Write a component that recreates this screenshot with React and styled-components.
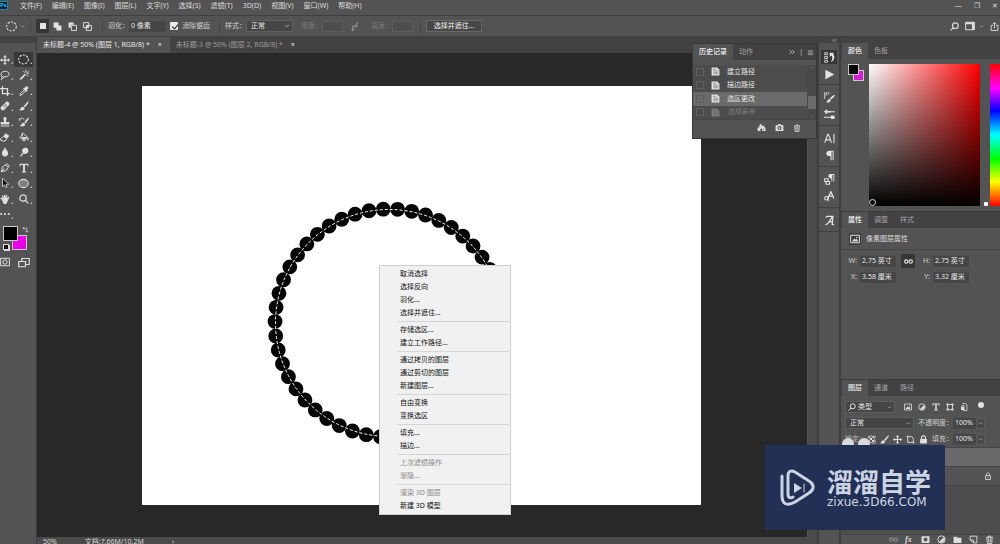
import React from 'react';
import styled, { createGlobalStyle, css } from 'styled-components';

const GlobalStyle = createGlobalStyle`
*{
    box-sizing: border-box;
    margin: 0;
    padding: 0;
}
body{
    font-family: "Noto Sans", "Noto Sans CJK SC", sans-serif;
    font-size: 7px;
    line-height: 12px;
    color: #dcdcdc;
    background: #535353;
    overflow: hidden;
}
button, input, select{
    font: inherit;
    color: inherit;
    border: none;
    background: none;
    outline: none;
}
svg{
    display: block;
    flex: none;
}
`;

// every glyph is drawn on a 16 x 16 board
const line = { fill: 'none', stroke: 'currentColor', strokeWidth: 1.6 };
const glyphs = {
  move: <path d="M8 0l3 3.4H9v3.7h3.7V5L16 8l-3.3 3V9H9v3.700h2L8 16l-3-3.300h2V9H3.300v2L0 8l3.300-3v2.100H7V3.400H5z" />,
  marquee: <ellipse cx="8" cy="8" rx="7" ry="6.500" {...line} strokeDasharray="3.200 1.800" />,
  lasso: <path d="M4 10.500C-1 8 2 2 8 2s9 5 4 8c-3 1.500-6 1-8 .5zm0 0c-2 0-2 3 0 3s2-2 0-3m-1 3l-1 2.500" {...line} />,
  wand: <g><path d="M1 14L9 6l2 2-8 8z" /><path d="M11 0v4M7 2l2 2M15 2l-2 2M12 5h4M12 7l3 3" {...line} /></g>,
  crop: <path d="M4 0v12h12M0 4h12v12" {...line} strokeWidth="2" />,
  eyedrop: <g><path d="M9 3l2-2c2-2 5 1 3.500 3.500L12.500 6.500l1 1-2 2-5-5 2-2z" /><path d="M8.500 6L2 12.500 1.500 15l2.500-.5L10.500 8" {...line} /></g>,
  heal: <g><path d="M1.500 9.500l8-8c3-2 7 2 5 5l-8 8c-3 2-7-2-5-5z" /><path d="M5 6l5 5M7 4l5 5M6 9l1 1M9 6l1 1" stroke="#535353" strokeWidth="1.200" /></g>,
  brush: <path d="M15.500.5C16.500 2 11 9 9.500 10.500l-2-2C9 6.500 14.500-.5 15.500.5zM6.800 9.200l2.200 2.200C8.500 15 4 16 0 14c3-.5 2.500-5 6.800-4.800z" />,
  stamp: <path d="M5.500 3c0-4 5-4 5 0 0 2-1 3-1 5H15v4H1V8h5.500c0-2-1-3-1-5zM1 13.500h14V15H1z" />,
  historyBrush: <g><path d="M15.500 1C16.500 2.500 12 9 10.500 10.500l-2-2C10 6.500 14.500 0 15.500 1zM7.800 9.200l2.200 2.200c-.5 3.600-5 4.600-9 2.600 3-.5 2.500-5 6.800-4.800z" /><path d="M1 6V2m0 3c2-4 6-4 7-1" {...line} /></g>,
  eraser: <g><path d="M9 2l6 4-4 5-6-4z" /><path d="M4.500 7.500L1 11v2l4 1.500h3l3-3.500" {...line} /></g>,
  bucket: <g><path d="M7 2l7 7-6 6-6.500-6.500zM5 1v6" {...line} /><path d="M13 8c3 2 3 4 2 6-2-1-2-3-2-6zM3 8h10l-5 5z" /></g>,
  drop: <path d="M8 0c1 4 5 6 5 10a5 5 0 0 1-10 0c0-4 4-6 5-10z" />,
  dodge: <path d="M10 1a5 5 0 1 1-2.500 9.300L3 15.500 1.500 14 6 9A5 5 0 0 1 10 1z" />,
  pen: <path d="M2 14L4 6l5-3 4 4-3 5zm0 0l5-5M9 3l2-2 4 4-2 2" {...line} />,
  type: <path d="M1 1h14v4h-1.500L13 3H9.500v10l2 .5V15h-7v-1.500l2-.5V3H3l-.5 2H1z" />,
  arrow: <path d="M4 0l10 10H9.500l2 4.500-2.500 1L7 11l-3 3z" fill="#111" stroke="currentColor" strokeWidth="1.300" />,
  ellipse: <ellipse cx="8" cy="8" rx="7" ry="6" fill="#808080" stroke="currentColor" strokeWidth="1.500" />,
  hand: <path d="M3 9L0 7l1.500-1.500L4 7 3 2.500 4.800 2 6.500 6V1h2v5L10 1.500l1.800.5L11 7l2.500-3 1.500 1-3 7-2 4H6z" />,
  zoom: <path d="M11.500 6.500a5 5 0 1 1-10 0 5 5 0 0 1 10 0zM10 10l5 5" {...line} strokeWidth="2" />,
  find: <path d="M14.500 6.500a5 5 0 1 1-10 0 5 5 0 0 1 10 0zM6 10l-5 5" {...line} strokeWidth="2" />,
  dots: <g><circle cx="2" cy="8" r="1.700" /><circle cx="8" cy="8" r="1.700" /><circle cx="14" cy="8" r="1.700" /></g>,
  swap: <path d="M2 5h9v9M5 2L2 5l3 3M8 11l3 3 3-3" {...line} />,
  mask: <g><path d="M1 2h14v12H1z" {...line} /><circle cx="8" cy="8" r="3.500" {...line} /></g>,
  screens: <g><path d="M5 2h10v8H5z" {...line} /><path d="M1 6h9v7H1z" fill="#535353" stroke="currentColor" strokeWidth="1.600" /></g>,
  square: <path d="M2 2h12v12H2z" />,
  unite: <path d="M1 1h9v5h5v9H6v-5H1z" />,
  subtract: <g><path d="M1 1h9v4H5v5H1z" /><path d="M6 6h9v9H6z" {...line} /></g>,
  intersect: <g><path d="M1 1h9v9H1zM6 6h9v9H6z" {...line} /><path d="M6 6h4v4H6z" /></g>,
  exchange: <path d="M5 15V7h8M2 12l3 3 3-3M10 4l3 3-3 3M13 0v4" {...line} />,
  workspace: <g><path d="M1 2h14v12H1z" {...line} /><path d="M11 2h4v12h-4zM1 2h14v3H1z" /></g>,
  share: <path d="M5 6H2v9h12V6h-3M8 11V1M5 4l3-3 3 3" {...line} />,
  down: <path d="M3 5l5 5 5-5" {...line} />,
  up: <path d="M3 11l5-5 5 5" {...line} />,
  menu: <path d="M2 4h12M2 7h12M2 10h12M2 13h12" {...line} strokeWidth="1.300" />,
  forward: <path d="M2 3l5 5-5 5M9 3l5 5-5 5" {...line} strokeWidth="2.400" />,
  back: <path d="M7 3L2 8l5 5M14 3L9 8l5 5" {...line} strokeWidth="2" />,
  state: <g><path d="M1 1h10l4 4v10H1z" /><path d="M3 4h6M4 7h9M4 9.500h9M4 12h9" stroke="#606060" strokeWidth="1" /></g>,
  newDoc: <path d="M1 14V8h3V4l4-3v4h5v3h2v6H9v-4H6v4zM10 10h2v2h-2z" fillRule="evenodd" />,
  camera: <path d="M1 4h3l1.500-2h5L12 4h3v10H1zm7 1.500a3.500 3.500 0 1 0 .1 0zm0 2a1.500 1.500 0 1 1-.1 0z" fillRule="evenodd" />,
  trash: <path d="M2 4h12M6 4V2h4v2M3.500 4l.5 11h8l.5-11M6.500 6v7M9.500 6v7" {...line} />,
  history: <g><path d="M1 1h4v3H1zM1 6.500h4v3H1zM1 12h4v3H1z" {...line} strokeWidth="1.200" /><path d="M8 1h6v1.500l-1 0c4 5 2 9-3 12.500 2-4 3-7 1-10L8.500 7z" /></g>,
  play: <path d="M2 1l13 7-13 7z" />,
  brushes: <g><path d="M1 0v10M4 0v3M7 0v3M2 4h3" {...line} strokeWidth="1.200" /><path d="M16 4c0 2-4 6-6 7l-1.500-1.500C10 7 15 3 16 4zM8 10l2 2c-1 3-4 4-7 3 2-1 2-5 5-5z" /></g>,
  sliders: <g><path d="M0 4h16M0 12h16" {...line} /><path d="M2 1h3v6H2zM10 9.500h5v5h-5zM6 3h4v2H6z" /></g>,
  character: <path d="M1 14L5.500 2h1L11 14M2.500 10h7M14.500 1v14" {...line} />,
  paragraph: <path d="M8 1h6v14h-1.500V2.500H11V15H9.500V9C1 9 2 1 8 1z" />,
  paragraphStyle: <g><path d="M9 0h6v11h-1.300V1.500H12V11h-1.300V6.500C5 6 5.500 0 9 0z" /><path d="M1 7h5v4H1zM3 11h5v4H3z" {...line} /></g>,
  characterStyle: <g><path d="M6 10l4-9 4.500 10M8 7.500h5" {...line} strokeWidth="1.800" /><circle cx="3.500" cy="10.500" r="2.500" {...line} /><path d="M6 8v7" {...line} /></g>,
  glyph: <path d="M3 4c0-3 3-2 6-2h4l-1 12h2.500M12.500 2C9 7 6 14 2 14M6.500 10H12" {...line} strokeWidth="1.800" />,
  image: <g><path d="M1 2h14v12H1z" {...line} /><path d="M3 12l4-5 2 2 2-1.500 2 4.500z" /><circle cx="11" cy="5.500" r="1.200" /></g>,
  adjust: <g><circle cx="8" cy="8" r="6.500" {...line} /><path d="M12.500 3.500A6.500 6.500 0 0 1 3.500 12.500z" /></g>,
  shape: <g><path d="M3 3h10v10H3z" {...line} /><path d="M1 1h4v4H1zM11 1h4v4h-4zM1 11h4v4H1zM11 11h4v4h-4z" /></g>,
  smart: <g><path d="M5 1h6l3 3v11H6" {...line} /><path d="M2 8h7v6H2z" /><path d="M3.500 8V5h4v3" {...line} /></g>,
  checker: <path d="M1 1h4v4H1zM9 1h4v4H9zM5 5h4v4H5zM13 5h2v4h-2zM1 9h4v4H1zM9 9h4v4H9zM5 13h4v2H5zM1 1h14v14H1V1m1 1v12h12V2z" fillRule="evenodd" />,
  artboard: <path d="M3 1v12h12M1 3h9l3 3v9" {...line} />,
  lock: <g><path d="M2 7h12v8H2z" /><path d="M4.500 7V4.500c0-4 7-4 7 0V7" {...line} strokeWidth="2" /></g>,
  lockOpen: <g><path d="M3 7h10v8H3z" {...line} /><path d="M5 7V4.500c0-4 6-4 6 0V7M8 9v3" {...line} /></g>,
  link: <path d="M7 8c0-4-6-4-6 0s6 4 6 0zm8 0c0-4-6-4-6 0s6 4 6 0z" {...line} strokeWidth="2" />,
  layerMask: <path d="M1 2h14v12H1zM8 4.500a3.500 3.500 0 1 0 .1 0z" fillRule="evenodd" />,
  folder: <path d="M1 3h6l1 2h7v9H1z" />,
  newLayer: <path d="M2 2h12v12H8L2 9zM2 9h6v5" {...line} />,
};

const Icon = ({ name, size = 9 }) => (
  <svg width={size} height={size} viewBox="0 0 16 16" fill="currentColor" aria-hidden="true">
    {glyphs[name]}
  </svg>
);

const Page = styled.div`
    display: flex;
    flex-direction: column;
    height: 100vh;
    min-width: 0;
    position: relative;
    overflow: hidden;
`;

const MenuBar = styled.header`
    display: flex;
    align-items: center;
    height: 16px;
    padding-bottom: 4px;
    padding-right: 2px;
    border-bottom: 1px solid #404040;
    nav{
        display: flex;
        gap: 10px;
        flex: 1;
        margin-left: 12px;
    }
`;
const PsLogo = styled.div`
    width: 8px;
    height: 9px;
    background: #06222f;
    border: 1px solid #1b86ae;
    border-left: none;
    color: #29b3e8;
    font-size: 6px;
    line-height: 7px;
    font-weight: 700;
`;
const PlainButton = styled.button`
    white-space: nowrap;
    display: flex;
    align-items: center;
`;
const WindowButtons = styled.div`
    display: flex;
    gap: 12px;
`;

const OptionsBar = styled.div`
    display: flex;
    align-items: center;
    height: 21px;
    flex: none;
    padding: 0 1px 0 6px;
    border-bottom: 1px solid #404040;
    white-space: nowrap;
`;
const Divider = styled.i`
    width: 1px;
    height: 14px;
    background: #464646;
    margin: 0 5px;
`;
const Modes = styled.div`
    display: flex;
    gap: 2px;
    margin-right: 3px;
`;
const ToolButton = styled.button`
    display: flex;
    align-items: center;
    justify-content: center;
    width: 13px;
    height: 14px;
    color: #e4e4e4;
    background: ${({ $active }) => ($active ? '#363636' : 'none')};
`;
const Label = styled.label`
    display: flex;
    align-items: center;
    gap: ${({ $gap }) => $gap || 0}px;
    white-space: nowrap;
    color: ${({ $dim }) => ($dim ? '#777' : '#d0d0d0')};
`;
const Field = styled.input`
    width: ${({ $w }) => $w}px;
    height: 11px;
    padding: 0 1px;
    background: ${({ $dim }) => ($dim ? '#4d4d4d' : '#454545')};
    border: 1px solid ${({ $dim }) => ($dim ? '#5c5c5c' : '#484848')};
    color: #e8e8e8;
`;
const Check = styled.input`
    appearance: none;
    width: 8px;
    height: 8px;
    background: #e8e8e8;
    border-radius: 1px;
    position: relative;
    &:checked::after{
        content: "";
        position: absolute;
        left: 3px;
        top: 1px;
        width: 3px;
        height: 5px;
        border: solid #222;
        border-width: 0 1px 1px 0;
        transform: rotate(40deg);
    }
`;
const SelectBox = styled.span`
    display: flex;
    align-items: center;
    width: ${({ $w }) => $w}px;
    height: 12px;
    padding: 0 2px;
    background: #454545;
    border: 1px solid #5f5f5f;
    color: #e4e4e4;
    select{
        appearance: none;
        flex: 1;
        min-width: 0;
        padding-left: 2px;
    }
`;
const MaskButton = styled.button`
    width: 56px;
    height: 12px;
    border: 1px solid #686868;
    background: #474747;
    color: #f0f0f0;
    line-height: 10px;
`;
const OptionsEnd = styled.div`
    display: flex;
    align-items: center;
    gap: 6px;
    margin-left: auto;
`;
const Swap = styled.span`
    margin: 0 12px 0 7px;
    color: #a4a4a4;
`;
const Gap = styled.span`
    width: ${({ $w }) => $w}px;
`;

const Body = styled.div`
    display: flex;
    flex: 1;
    min-height: 0;
`;

const Toolbox = styled.aside`
    width: 37px;
    flex: none;
    border-right: 1px solid #3c3c3c;
    background: #535353;
    color: #dedede;
    overflow: hidden;
`;
const Strip = styled.div`
    height: 6px;
    background: #424242;
    display: flex;
    align-items: center;
    justify-content: flex-end;
    padding-right: 2px;
    color: #bbb;
`;
const ToolGrid = styled.div`
    display: grid;
    grid-template-columns: 19px 19px;
    grid-template-rows: repeat(11, 1fr);
    height: 170px;
    margin: 9px 0 0 -5px;
`;
const Tool = styled.button`
    display: flex;
    align-items: center;
    justify-content: center;
    position: relative;
    background: ${({ $active }) => ($active ? '#383838' : 'none')};
    &::after{
        content: "";
        position: absolute;
        right: 1px;
        bottom: 3px;
        border-left: 2px solid transparent;
        border-bottom: 2px solid #bbb;
    }
`;
const Swatches = styled.div`
    position: relative;
    width: 16px;
    height: 17px;
    color: #ccc;
    flex: none;
`;
const swatchPlace = {
  front: css`left: 0; top: 0; z-index: 1;`,
  back: css`right: 0; bottom: 0;`,
};
const Swatch = styled.button`
    position: absolute;
    width: ${({ $size }) => $size}px;
    height: ${({ $size }) => $size}px;
    background: ${({ $color }) => $color};
    border: 1px solid #c8c8c8;
    ${({ $place }) => swatchPlace[$place]}
`;
const ToolSwatches = styled(Swatches)`
    width: 24px;
    height: 24px;
    margin-left: 3px;
    /* the small reset pair under the front colour */
    &::after{
        content: "";
        position: absolute;
        left: 0;
        bottom: 0;
        width: 4px;
        height: 4px;
        background: #111;
        border: 1px solid #ddd;
        box-shadow: 1px 1px 0 #ddd;
    }
`;
const ToolColors = styled.div`
    display: flex;
    padding-top: 4px;
    color: #d8d8d8;
    > svg{
        margin-left: -5px;
    }
`;
const ToolFoot = styled.div`
    display: flex;
    gap: 8px;
    padding-top: 7px;
`;

const Workspace = styled.main`
    flex: 1;
    min-width: 0;
    display: flex;
    flex-direction: column;
    position: relative;
`;
const DocTabs = styled.div`
    display: flex;
    height: 16px;
    flex: none;
    background: #424242;
`;
const DocTab = styled.button`
    display: flex;
    align-items: center;
    gap: 8px;
    padding: 0 8px 0 6px;
    white-space: nowrap;
    background: ${({ $active }) => ($active ? '#535353' : 'none')};
    color: ${({ $active }) => ($active ? '#e6e6e6' : '#9c9c9c')};
    b{
        color: #d0d0d0;
    }
`;
const CanvasArea = styled.div`
    flex: 1;
    min-height: 0;
    display: flex;
    background: #282828;
`;
const Stage = styled.div`
    flex: 1;
    display: flex;
    padding: 33px 106px 32px 105px;
`;
const Artboard = styled.div`
    flex: 1;
    background: #fff;
    svg{
        width: 100%;
        height: 100%;
    }
`;
const ScrollTrack = styled.div`
    width: 10px;
    background: #4a4a4a;
    border-left: 1px solid #555;
`;
const StatusBar = styled.footer`
    display: flex;
    height: 7px;
    flex: none;
    padding-left: 6px;
    gap: 28px;
    background: #4a4a4a;
    overflow: hidden;
    line-height: 10px;
    color: #d4d4d4;
`;

const HistoryPanel = styled.section`
    position: absolute;
    top: 6px;
    right: 0;
    width: 125px;
    background: #535353;
    border: 1px solid #383838;
    z-index: 2;
`;
const PanelTabs = styled.div`
    display: flex;
    align-items: stretch;
    height: 16px;
    background: #424242;
    padding-left: ${({ $inset }) => $inset || 0}px;
`;
const PanelTab = styled.button`
    padding: 0 6px;
    white-space: nowrap;
    font-weight: ${({ $active }) => ($active ? 500 : 400)};
    background: ${({ $active }) => ($active ? '#535353' : 'none')};
    color: ${({ $active }) => ($active ? '#f0f0f0' : '#a0a0a0')};
`;
const PanelMenu = styled.div`
    display: flex;
    align-items: center;
    gap: 4px;
    margin-left: auto;
    padding-right: 2px;
    color: #c4c4c4;
`;
const HistoryBody = styled.div`
    display: flex;
    margin-top: 5px;
    background: #4c4c4c;
    ul{
        flex: 1;
        height: 54px;
        display: grid;
        grid-template-rows: repeat(4, 1fr);
        list-style: none;
    }
`;
const HistoryRow = styled.li`
    display: flex;
    align-items: center;
    padding-left: 3px;
    background: ${({ $active }) => ($active ? '#6a6a6a' : 'none')};
    color: ${({ $dim }) => ($dim ? '#7c7c7c' : '#e4e4e4')};
    font-style: ${({ $dim }) => ($dim ? 'italic' : 'normal')};
    i{
        width: 8px;
        height: 8px;
        border: 1px solid #5e5e5e;
        margin-right: 7px;
    }
    svg{
        margin-right: 7px;
    }
`;
const HistoryScroll = styled.div`
    width: 9px;
    display: flex;
    flex-direction: column;
    align-items: center;
    justify-content: space-between;
    background: #484848;
    color: #888;
    i{
        width: 8px;
        height: 13px;
        margin-top: 20px;
        background: #6a6a6a;
    }
`;
const HistoryFoot = styled.div`
    display: flex;
    align-items: center;
    justify-content: flex-end;
    gap: 9px;
    height: 19px;
    padding: 0 15px 3px 0;
    border-top: 1px solid #464646;
    color: #dedede;
`;

const Dock = styled.aside`
    width: 24px;
    flex: none;
    border-left: 2px solid #3e3e3e;
    border-right: 2px solid #3e3e3e;
    background: #535353;
`;
const DockGroup = styled.div`
    display: flex;
    flex-direction: column;
    align-items: center;
    gap: 3px;
    padding: ${({ $first }) => ($first ? '7px 0 3px' : '5px 0 4px')};
    border-bottom: 1px solid #404040;
`;
const DockButton = styled(ToolButton)`
    width: 16px;
`;

const Panels = styled.aside`
    width: 159px;
    flex: none;
    display: flex;
    flex-direction: column;
    background: #535353;
`;
const ColorBody = styled.div`
    display: flex;
    height: 153px;
    padding: 5px 0 5px 7px;
    border-bottom: 1px solid #3c3c3c;
`;
const ColorField = styled.div`
    width: 111px;
    margin-left: 5px;
    background: linear-gradient(to top, #000, transparent), linear-gradient(to right, #fff, #f00);
    display: flex;
    align-items: flex-end;
    i{
        width: 7px;
        height: 7px;
        border: 1px solid #ddd;
        border-radius: 50%;
    }
`;
const HueThumb = styled.i`
    width: 4px;
    height: 4px;
    border-radius: 1px;
    background: #fff;
    margin: auto 0 0 4px;
`;
const Hue = styled.div`
    flex: 1;
    margin-left: 2px;
    background: linear-gradient(to bottom, #f00, #f0f 17%, #00f 33%, #0ff 50%, #0f0 67%, #ff0 83%, #f00);
`;
const PropTitle = styled.h2`
    display: flex;
    align-items: center;
    gap: 5px;
    height: 22px;
    padding-left: 8px;
    font-size: 7px;
    font-weight: 400;
    border-bottom: 1px solid #464646;
    span{
        padding: 1px;
        background: #3c3c3c;
    }
`;
const PropGrid = styled.div`
    display: grid;
    grid-template-columns: 48px 15px 48px;
    column-gap: 5px;
    row-gap: 3px;
    align-items: center;
    padding: 4px 0 0 7px;
    flex: 1;
    align-content: start;
    label{
        justify-content: flex-end;
    }
    ${ToolButton}{
        width: 14px;
    }
`;
const LayersTabs = styled(PanelTabs)`
    border-top: 1px solid #3c3c3c;
    height: 17px;
    flex: none;
`;
const LayersPanel = styled.section`
    display: flex;
    flex-direction: column;
    height: 148px;
    flex: none;
`;
const LayerControls = styled.div`
    display: flex;
    align-items: center;
    gap: 4px;
    height: 16px;
    flex: none;
    margin-top: ${({ $top }) => $top || 0}px;
    padding-left: 4px;
    white-space: nowrap;
    color: #e0e0e0;
`;
const LockLabel = styled.span`
    width: 18px;
    color: #b8b8b8;
`;
const FilterIcons = styled.div`
    display: flex;
    gap: 6px;
    margin-left: 5px;
`;
const FilterDot = styled.i`
    width: 6px;
    height: 6px;
    border-radius: 50%;
    background: #e4e4e4;
    margin: 0 0 5px 6px;
`;
const DropButton = styled.button`
    display: flex;
    align-items: center;
    justify-content: center;
    width: 9px;
    height: 11px;
    margin-left: -4px;
    background: #484848;
    border: 1px solid #5c5c5c;
`;
const LayerList = styled.div`
    flex: 1;
    background: #4d4d4d;
    border-top: 1px solid #464646;
`;
const LayerRow = styled.div`
    height: 19px;
    display: flex;
    align-items: center;
    justify-content: flex-end;
    padding-right: 8px;
    border-bottom: 1px solid #464646;
    background: ${({ $active }) => ($active ? '#696969' : '#535353')};
`;
const LayersFoot = styled.div`
    display: flex;
    align-items: center;
    justify-content: flex-end;
    gap: 7px;
    height: 10px;
    flex: none;
    padding-right: 6px;
    color: #dedede;
    border-top: 1px solid #444;
    em{
        font: italic 700 8px "Liberation Serif", serif;
        width: 9px;
    }
    svg:first-child{
        color: #8a8a8a;
    }
`;

const ContextMenu = styled.div`
    position: absolute;
    left: 342px;
    top: 228px;
    width: 132px;
    padding: 1px 0 2px;
    background: #f1f1f1;
    border: 1px solid #d0d0d0;
    hr{
        margin: 2px 1px 1px 17px;
        border: none;
        border-top: 1px solid #d6d6d6;
    }
`;
const ContextItem = styled.button`
    display: block;
    width: 100%;
    height: 13px;
    padding-left: 20px;
    line-height: 12px;
    text-align: left;
    color: #111;
    &:disabled{
        color: #8a8a8a;
    }
`;

const Watermark = styled.div`
    position: absolute;
    right: 55px;
    bottom: 14px;
    width: 180px;
    height: 85px;
    display: flex;
    align-items: center;
    gap: 12px;
    padding-left: 15px;
    background: #223056;
    color: #ccd3e2;
    z-index: 3;
    strong{
        display: block;
        font-family: "Noto Sans CJK SC", sans-serif;
        font-size: 26px;
        font-weight: 700;
        line-height: 28px;
    }
    small{
        display: block;
        margin-top: 1px;
        font: 12px/12px "DejaVu Sans", sans-serif;
    }
`;
const Ears = styled.div`
    position: absolute;
    right: 130px;
    bottom: 94px;
    display: flex;
    gap: 4px;
    z-index: 2;
    i{
        width: 12px;
        height: 12px;
        border-radius: 50%;
        background: #d6dad8;
    }
`;

const menus = ['文件(F)', '编辑(E)', '图像(I)', '图层(L)', '文字(Y)', '选择(S)', '滤镜(T)', '3D(D)', '视图(V)', '窗口(W)', '帮助(H)'];

const tools = [
  'move', 'marquee', 'lasso', 'wand', 'crop', 'eyedrop', 'heal', 'brush', 'stamp', 'historyBrush',
  'eraser', 'bucket', 'drop', 'dodge', 'pen', 'type', 'arrow', 'ellipse', 'hand', 'zoom', 'dots',
];

const dockGroups = [
  ['history', 'play'],
  ['brushes', 'sliders'],
  ['character', 'paragraph'],
  ['paragraphStyle', 'characterStyle'],
  ['glyph'],
];

const contextGroups = [
  ['取消选择', '选择反向', '羽化...', '选择并遮住...'],
  ['存储选区...', '建立工作路径...'],
  ['通过拷贝的图层', '通过剪切的图层', '新建图层...'],
  ['自由变换', '变换选区'],
  ['填充...', '描边...'],
  ['上次滤镜操作', '渐隐...'],
  ['渲染 3D 图层', '新建 3D 模型'],
];
const disabledItems = ['上次滤镜操作', '渐隐...', '渲染 3D 图层'];

const beads = Array.from({ length: 50 }, (_, i) => {
  const a = ((i * 7.2 + 4.3) * Math.PI) / 180;
  return [247 + 114 * Math.sin(a), 237 - 114 * Math.cos(a)];
});

const Options = () => (
  <OptionsBar>
    <Icon name="marquee" size={11} />
    <Gap $w={3} />
    <Icon name="down" size={5} />
    <Divider />
    <Modes>
      {['square', 'unite', 'subtract', 'intersect'].map((m, i) => (
        <ToolButton key={m} $active={i === 0} aria-label={m}><Icon name={m} size={i ? 9 : 8} /></ToolButton>
      ))}
    </Modes>
    <Divider />
    <Label>羽化：<Field $w={37} defaultValue="0 像素" /></Label>
    <Gap $w={4} />
    <Label $gap={4}><Check type="checkbox" defaultChecked />消除锯齿</Label>
    <Gap $w={4} />
    <Divider />
    <Label>
      样式：
      <SelectBox $w={47}>
        <select defaultValue="正常"><option>正常</option></select>
        <Icon name="down" size={6} />
      </SelectBox>
    </Label>
    <Gap $w={8} />
    <Label $dim>宽度：<Field $w={21} $dim disabled /></Label>
    <Swap><Icon name="exchange" size={9} /></Swap>
    <Label $dim>高度：<Field $w={21} $dim disabled /></Label>
    <Gap $w={2} />
    <Divider />
    <MaskButton>选择并遮住...</MaskButton>
    <OptionsEnd>
      <Icon name="find" size={9} />
      <PlainButton aria-label="工作区"><Icon name="workspace" size={10} /><Gap $w={4} /><Icon name="down" size={5} /></PlainButton>
      <Icon name="share" size={9} />
    </OptionsEnd>
  </OptionsBar>
);

const ToolPanel = () => (
  <Toolbox>
    <Strip />
    <ToolGrid>
      {tools.map((t) => (
        <Tool key={t} $active={t === 'marquee'} aria-label={t}><Icon name={t} size={t === 'marquee' || t === 'ellipse' ? 11 : 10} /></Tool>
      ))}
    </ToolGrid>
    <ToolColors>
      <ToolSwatches>
        <Swatch $size={15} $place="front" $color="#000" aria-label="前景色" />
        <Swatch $size={15} $place="back" $color="#e800e8" aria-label="背景色" />
      </ToolSwatches>
      <Icon name="swap" size={7} />
    </ToolColors>
    <ToolFoot>
      <Icon name="mask" size={10} />
      <Icon name="screens" size={12} />
    </ToolFoot>
  </Toolbox>
);

const History = () => (
  <HistoryPanel>
    <PanelTabs>
      <PanelTab $active>历史记录</PanelTab>
      <PanelTab>动作</PanelTab>
      <PanelMenu><Icon name="forward" size={6} /><span>|</span><Icon name="menu" size={7} /></PanelMenu>
    </PanelTabs>
    <HistoryBody>
      <ul>
        {['建立路径', '描边路径', '选区更改', '选择画布'].map((name, i) => (
          <HistoryRow key={name} $active={i === 2} $dim={i === 3}><i /><Icon name="state" />{name}</HistoryRow>
        ))}
      </ul>
      <HistoryScroll><Icon name="up" size={5} /><i /><Icon name="down" size={5} /></HistoryScroll>
    </HistoryBody>
    <HistoryFoot>
      <Icon name="newDoc" />
      <Icon name="camera" />
      <Icon name="trash" size={8} />
    </HistoryFoot>
  </HistoryPanel>
);

const SidePanels = () => (
  <Panels>
    <Strip />
    <PanelTabs $inset={1}>
      <PanelTab $active>颜色</PanelTab>
      <PanelTab>色板</PanelTab>
    </PanelTabs>
    <ColorBody>
      <Swatches>
        <Swatch $size={11} $place="front" $color="#000" aria-label="前景色" />
        <Swatch $size={11} $place="back" $color="#d21cd2" aria-label="背景色" />
      </Swatches>
      <ColorField><i /></ColorField>
      <HueThumb />
      <Hue />
    </ColorBody>
    <PanelTabs $inset={1}>
      <PanelTab $active>属性</PanelTab>
      <PanelTab>调整</PanelTab>
      <PanelTab>样式</PanelTab>
    </PanelTabs>
    <PropTitle><span><Icon name="image" size={10} /></span>像素图层属性</PropTitle>
    <PropGrid>
      <Label $gap={3}>W:<Field $w={36} defaultValue="2.75 英寸" /></Label>
      <ToolButton $active aria-label="链接"><Icon name="link" size={9} /></ToolButton>
      <Label $gap={3}>H:<Field $w={36} defaultValue="2.75 英寸" /></Label>
      <Label $gap={3}>X:<Field $w={36} defaultValue="3.58 厘米" /></Label>
      <span />
      <Label $gap={3}>Y:<Field $w={36} defaultValue="3.32 厘米" /></Label>
    </PropGrid>
    <LayersTabs $inset={1}>
      <PanelTab $active>图层</PanelTab>
      <PanelTab>通道</PanelTab>
      <PanelTab>路径</PanelTab>
    </LayersTabs>
    <LayersPanel>
      <LayerControls $top={3}>
        <SelectBox $w={50}>
          <Icon name="find" size={8} />
          <select defaultValue="类型" aria-label="筛选"><option>类型</option></select>
          <Icon name="down" size={5} />
        </SelectBox>
        <FilterIcons>
          {['image', 'adjust', 'type', 'shape', 'smart'].map((n) => <Icon key={n} name={n} size={8} />)}
        </FilterIcons>
        <FilterDot />
      </LayerControls>
      <LayerControls>
        <SelectBox $w={69}>
          <select defaultValue="正常" aria-label="混合模式"><option>正常</option></select>
          <Icon name="down" size={5} />
        </SelectBox>
        <Label>不透明度：<Field $w={23} defaultValue="100%" /></Label>
        <DropButton aria-label="不透明度"><Icon name="down" size={5} /></DropButton>
      </LayerControls>
      <LayerControls>
        <LockLabel>锁定：</LockLabel>
        {['checker', 'brush', 'move', 'artboard', 'lock'].map((n) => (
          <PlainButton key={n} aria-label={n}><Icon name={n} size={9} /></PlainButton>
        ))}
        <Label>填充：<Field $w={23} defaultValue="100%" /></Label>
        <DropButton aria-label="填充"><Icon name="down" size={5} /></DropButton>
      </LayerControls>
      <LayerList>
        <LayerRow $active />
        <LayerRow><Icon name="lockOpen" size={8} /></LayerRow>
      </LayerList>
      <LayersFoot>
        <Icon name="link" />
        <em>fx</em>
        <Icon name="layerMask" />
        <Icon name="adjust" />
        <Icon name="folder" />
        <Icon name="newLayer" />
        <Icon name="trash" />
      </LayersFoot>
    </LayersPanel>
  </Panels>
);

const App = () => {
  return (
    <Page>
      <GlobalStyle />
      <MenuBar>
        <PsLogo>Ps</PsLogo>
        <nav>{menus.map((m) => <PlainButton key={m}>{m}</PlainButton>)}</nav>
        <WindowButtons>
          <PlainButton>—</PlainButton>
          <PlainButton>❐</PlainButton>
          <PlainButton>✕</PlainButton>
        </WindowButtons>
      </MenuBar>
      <Options />
      <Body>
        <ToolPanel />
        <Workspace>
          <DocTabs>
            <DocTab $active>未标题-4 @ 50% (图层 1, RGB/8) * <b>×</b></DocTab>
            <DocTab>未标题-3 @ 50% (图层 2, RGB/8) * <b>×</b></DocTab>
          </DocTabs>
          <CanvasArea>
            <Stage>
              <Artboard>
                <svg viewBox="0 0 559 419">
                  {beads.map(([x, y]) => <circle key={x} cx={x} cy={y} r="7.400" fill="#050505" />)}
                  <circle cx="247" cy="237" r="113.500" fill="none" stroke="#fff" strokeWidth="1" strokeDasharray="3 2" />
                </svg>
              </Artboard>
            </Stage>
            <ScrollTrack />
          </CanvasArea>
          <StatusBar>
            <span>50%</span>
            <span>文档:7.66M/10.2M</span>
            <span>›</span>
          </StatusBar>
          <History />
          <ContextMenu role="menu">
            {contextGroups.map((group, i) => (
              <React.Fragment key={i}>
                {i > 0 && <hr />}
                {group.map((item) => (
                  <ContextItem key={item} role="menuitem" disabled={disabledItems.includes(item)}>{item}</ContextItem>
                ))}
              </React.Fragment>
            ))}
          </ContextMenu>
        </Workspace>
        <Dock>
          <Strip><Icon name="back" size={5} /></Strip>
          {dockGroups.map((group, i) => (
            <DockGroup key={i} $first={i === 0}>
              {group.map((n) => (
                <DockButton key={n} $active={n === 'history'} aria-label={n}><Icon name={n} size={11} /></DockButton>
              ))}
            </DockGroup>
          ))}
        </Dock>
        <SidePanels />
      </Body>
      <Ears><i /><i /></Ears>
      <Watermark>
        <svg width="35" height="38" viewBox="0 0 35 38" fill="none" stroke="currentColor" strokeWidth="3" strokeLinecap="round">
          <path d="M2 7v20c0 9 6 10 13 6l14-9c6-4 5-9 0-12L15 3C11 1 8 2 8 7v18c0 5 4 4 5 3" />
          <path d="M14 14v10l8-5z" fill="currentColor" stroke="none" />
          <path d="M24 15v8" strokeWidth="1" />
        </svg>
        <div>
          <strong>溜溜自学</strong>
          <small>zixue.3D66.COM</small>
        </div>
      </Watermark>
    </Page>
  );
};

export default App;
